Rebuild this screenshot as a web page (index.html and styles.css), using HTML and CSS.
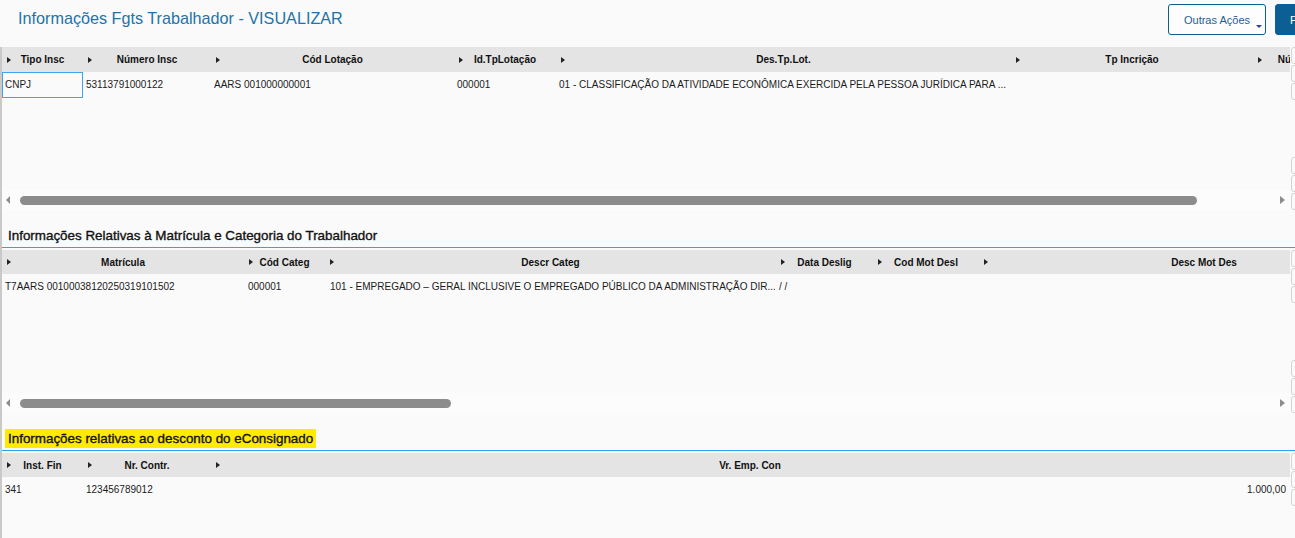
FILE: index.html
```html
<!DOCTYPE html>
<html lang="pt-BR">
<head>
<meta charset="utf-8">
<title>Informações Fgts Trabalhador - VISUALIZAR</title>
<link rel="stylesheet" href="styles.css">
</head>
<body>
<div class="page">
  <header class="topbar">
    <h1 class="title">Informações Fgts Trabalhador - VISUALIZAR</h1>
    <button class="btn btn-outline"><span></span><span class="btn-label">Outras Ações</span><span class="caret"></span></button>
    <button class="btn btn-primary">Fechar</button>
  </header>

  <main class="content">
    <!-- Grid 1 -->
    <section class="grid">
      <div class="grid-main">
        <div class="row head first cols-1">
          <div class="hcell"><i class="arr"></i><span>Tipo Insc</span></div>
          <div class="hcell"><i class="arr"></i><span>Número Insc</span></div>
          <div class="hcell"><i class="arr"></i><span>Cód Lotação</span></div>
          <div class="hcell"><i class="arr"></i><span>Id.TpLotação</span></div>
          <div class="hcell"><i class="arr"></i><span>Des.Tp.Lot.</span></div>
          <div class="hcell"><i class="arr"></i><span>Tp Incrição</span></div>
          <div class="hcell"><i class="arr"></i><span>Número Insc</span></div>
        </div>
        <div class="body first">
          <div class="row data cols-1">
            <div class="cell selected">CNPJ</div>
            <div class="cell">53113791000122</div>
            <div class="cell">AARS 001000000001</div>
            <div class="cell">000001</div>
            <div class="cell">01 - CLASSIFICAÇÃO DA ATIVIDADE ECONÔMICA EXERCIDA PELA PESSOA JURÍDICA PARA ...</div>
            <div class="cell"></div>
            <div class="cell"></div>
          </div>
        </div>
        <div class="hscroll">
          <i class="sarr left"></i>
          <div class="track"><div class="thumb" style="width:1177px"></div></div>
          <i class="sarr right"></i>
        </div>
      </div>
      <div class="vbar">
        <div class="vgroup"><div class="vbox"></div><div class="vbox"></div><div class="vbox"></div></div>
        <div class="vgroup"><div class="vbox"></div><div class="vbox"></div><div class="vbox"></div></div>
      </div>
    </section>

    <h2 class="section-title"><span>Informações Relativas à Matrícula e Categoria do Trabalhador</span></h2>

    <!-- Grid 2 -->
    <section class="grid">
      <div class="grid-main">
        <div class="row head cols-2">
          <div class="hcell"><i class="arr"></i><span>Matrícula</span></div>
          <div class="hcell"><i class="arr"></i><span>Cód Categ</span></div>
          <div class="hcell"><i class="arr"></i><span>Descr Categ</span></div>
          <div class="hcell"><i class="arr"></i><span>Data Deslig</span></div>
          <div class="hcell"><i class="arr"></i><span>Cod Mot Desl</span></div>
          <div class="hcell"><i class="arr"></i><span>Desc Mot Des</span></div>
        </div>
        <div class="body">
          <div class="row data cols-2">
            <div class="cell">T7AARS 00100038120250319101502</div>
            <div class="cell pad4">000001</div>
            <div class="cell pad5">101 - EMPREGADO – GERAL INCLUSIVE O EMPREGADO PÚBLICO DA ADMINISTRAÇÃO DIR...</div>
            <div class="cell">/ /</div>
            <div class="cell"></div>
            <div class="cell"></div>
          </div>
        </div>
        <div class="hscroll">
          <i class="sarr left"></i>
          <div class="track"><div class="thumb" style="width:431px"></div></div>
          <i class="sarr right"></i>
        </div>
      </div>
      <div class="vbar">
        <div class="vgroup"><div class="vbox"></div><div class="vbox"></div><div class="vbox"></div></div>
        <div class="vgroup"><div class="vbox"></div><div class="vbox"></div><div class="vbox"></div></div>
      </div>
    </section>

    <h2 class="section-title"><span class="marked">Informações relativas ao desconto do eConsignado</span></h2>

    <!-- Grid 3 -->
    <section class="grid">
      <div class="grid-main">
        <div class="row head cols-3">
          <div class="hcell"><i class="arr"></i><span>Inst. Fin</span></div>
          <div class="hcell"><i class="arr"></i><span>Nr. Contr.</span></div>
          <div class="hcell"><i class="arr"></i><span>Vr. Emp. Con</span></div>
        </div>
        <div class="body tall">
          <div class="row data cols-3">
            <div class="cell">341</div>
            <div class="cell">123456789012</div>
            <div class="cell num">1.000,00</div>
          </div>
        </div>
      </div>
      <div class="vbar">
        <div class="vgroup"><div class="vbox"></div><div class="vbox"></div><div class="vbox"></div></div>
      </div>
    </section>
  </main>
</div>
</body>
</html>
```

FILE: styles.css
```css
html, body {
  margin: 0;
  padding: 0;
  background: #fafafa;
  overflow: hidden;
}

body {
  font-family: "Liberation Sans", Arial, sans-serif;
  color: #1a1a1a;
}

.page {
  width: 1295px;
  height: 538px;
  overflow: hidden;
}

/* ---------- top bar ---------- */
.topbar {
  display: flex;
  align-items: flex-start;
  height: 47px;
}

.title {
  flex: 1 1 auto;
  min-width: 0;
  margin: 0;
  padding: 8px 0 0 18px;
  font-size: 16.2px;
  line-height: 20px;
  font-weight: normal;
  color: #2473a8;
  white-space: nowrap;
}

.btn {
  flex-shrink: 0;
  margin-top: 4px;
  height: 31px;
  border-radius: 3px;
  font-family: "Liberation Sans", Arial, sans-serif;
  font-size: 11px;
  padding: 0;
}

.btn-outline {
  width: 98px;
  margin-right: 9px;
  background: #fdfdfd;
  border: 1px solid #0b5e92;
  color: #1f5f8e;
  display: grid;
  grid-template-columns: 1fr auto 1fr;
  align-items: center;
}

.btn-label {
  white-space: nowrap;
}

.caret {
  justify-self: end;
  align-self: end;
  margin: 0 3px 6px 0;
  width: 0;
  height: 0;
  border-left: 3px solid transparent;
  border-right: 3px solid transparent;
  border-top: 3px solid #2a3f9a;
}

.btn-primary {
  width: 64px;
  margin-right: -44px;
  background: #0b5f94;
  border: 1px solid #0b5f94;
  color: #fff;
  text-align: center;
}

/* ---------- content ---------- */
.content {
  border-left: 2px solid #c9c9c9;
  height: 491px;
}

.grid {
  display: flex;
  align-items: stretch;
}

.grid-main {
  width: 1288px;
  flex-shrink: 0;
  overflow: hidden;
}

.row {
  display: grid;
}

.cols-1 { grid-template-columns: 81px 128px 243px 102px 455px 242px 110px; }
.cols-2 { grid-template-columns: 242px 81px 451px 97px 106px 450px; }
.cols-3 { grid-template-columns: 81px 128px 1078px; }

.head {
  height: 24px;
  background: #e4e4e4;
  font-size: 10px;
  font-weight: bold;
  color: #111;
}

.head.first {
  height: 25px;
}

.hcell {
  display: grid;
  grid-template-columns: 1fr auto 1fr;
  align-items: center;
  padding: 0 5px;
  white-space: nowrap;
  overflow: hidden;
}

.arr {
  justify-self: start;
  width: 0;
  height: 0;
  border-left: 4px solid #222;
  border-top: 3px solid transparent;
  border-bottom: 3px solid transparent;
}

.body {
  height: 119px;
}

.body.first {
  height: 118px;
}

.body.tall {
  height: 120px;
}

.data {
  height: 26px;
  font-size: 10px;
  line-height: 24px;
  color: #1a1a1a;
}

.cell {
  padding: 0 3px;
  border: 1px solid transparent;
  border-left: 0;
  white-space: nowrap;
  overflow: hidden;
}

.cell.selected {
  border: 1px solid #3ea6f0;
  padding: 0 2px;
}

.cell.pad4 { padding-left: 4px; }
.cell.pad5 { padding-left: 5px; }
.cell.num { text-align: right; padding-right: 2px; }

/* horizontal scrollbar */
.hscroll {
  height: 20px;
  display: flex;
  align-items: center;
  background: #fcfcfc;
}

.sarr {
  flex-shrink: 0;
  width: 0;
  height: 0;
  border-top: 4px solid transparent;
  border-bottom: 4px solid transparent;
}

.sarr.left {
  margin-left: 4px;
  border-right: 4px solid #8c8c8c;
}

.sarr.right {
  margin-right: 5px;
  border-left: 5px solid #8c8c8c;
}

.track {
  flex: 1;
  padding-left: 10px;
}

.thumb {
  height: 9px;
  border-radius: 5px;
  background: #8c8c8c;
}

/* vertical scrollbar stub */
.vbar {
  width: 14px;
  flex-shrink: 0;
  display: flex;
  flex-direction: column;
  justify-content: space-between;
  padding-left: 1px;
}

.vgroup {
  display: flex;
  flex-direction: column;
  gap: 1px;
}

.vbox {
  height: 17px;
  box-sizing: border-box;
  border: 1px solid #d4d4d4;
  border-radius: 3px;
  background: #fafafa;
}

/* section titles */
.section-title {
  margin: 0 0 2px 0;
  height: 37px;
  box-sizing: content-box;
  display: flex;
  align-items: flex-end;
  border-bottom: 1px solid #2ea3f2;
  font-size: 13.4px;
  font-weight: normal;
  color: #111;
  -webkit-text-stroke: 0.35px #111;
}

.section-title span {
  margin: 0 0 2px 3px;
  padding: 0 3px;
  line-height: 19px;
}

.section-title .marked {
  background: #ffeb00;
}
```
